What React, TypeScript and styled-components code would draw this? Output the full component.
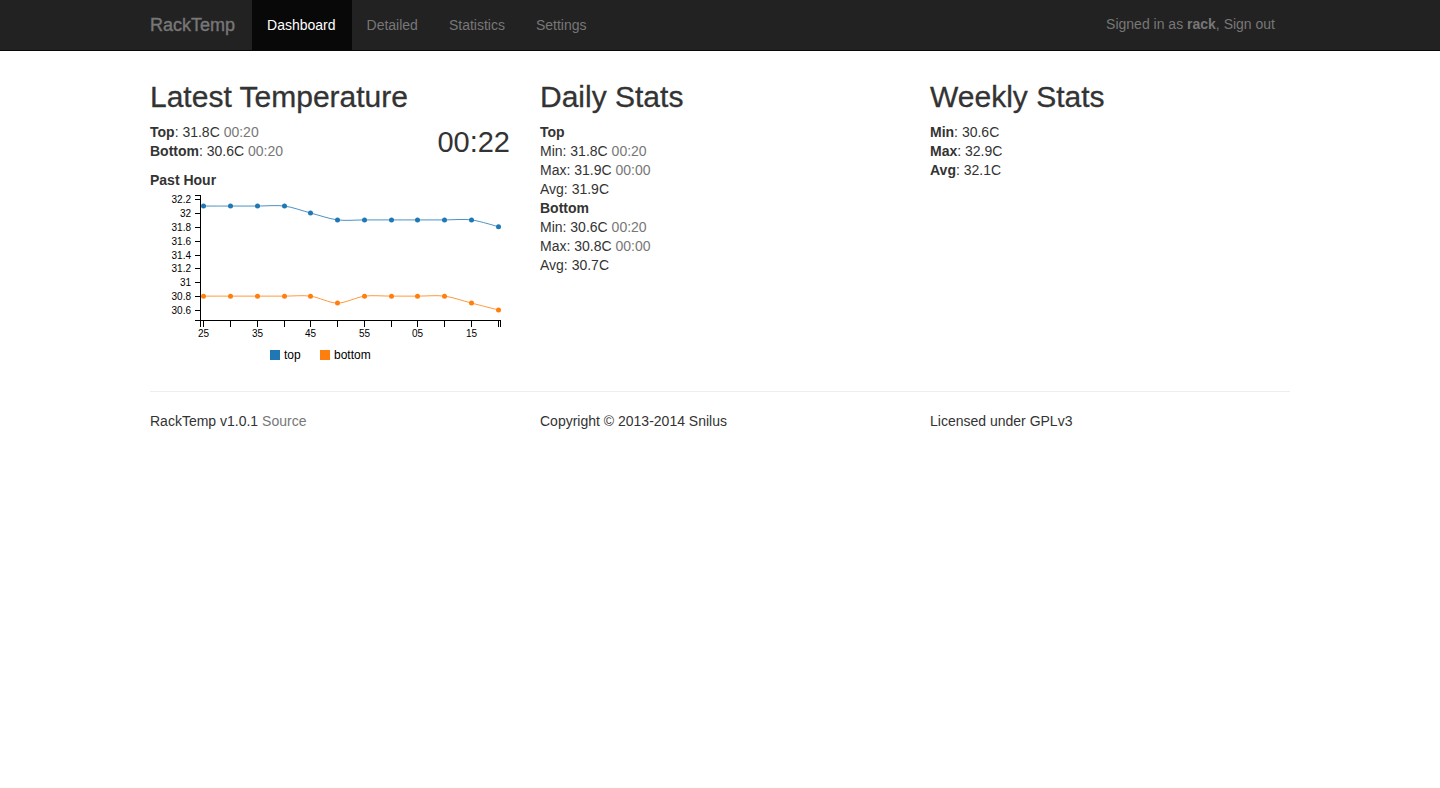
import React from "react";
import styled, { createGlobalStyle } from "styled-components";

const GlobalStyle = createGlobalStyle`
  *, *::before, *::after { box-sizing: border-box; }
  body {
    margin: 0;
    background: #fff;
    color: #333;
    font-family: "Liberation Sans", Arial, sans-serif;
    font-size: 14px;
    line-height: 19px;
  }
`;

const Container = styled.div`
  width: 100%;
  max-width: 1170px;
  margin: 0 auto;
  padding: 0 15px;
`;

const Navbar = styled.header`
  background: #222;
  border-bottom: 1px solid #080808;
`;

const NavInner = styled(Container)`
  display: flex;
  flex-wrap: wrap;
  align-items: flex-start;
  min-height: 50px;
`;

const Brand = styled.a`
  padding-right: 17px;
  color: #777;
  font-size: 18px;
  line-height: 50px;
  text-decoration: none;
  -webkit-text-stroke: 0.4px #777;
`;

const NavList = styled.ul`
  display: flex;
  margin: 0;
  padding: 0;
  list-style: none;
`;

const NavLink = styled.a<{ $active?: boolean }>`
  display: block;
  padding: 0 16px 0 15px;
  line-height: 50px;
  color: ${(p) => (p.$active ? "#fff" : "#777")};
  background: ${(p) => (p.$active ? "#080808" : "transparent")};
  text-decoration: none;
`;

const SignedIn = styled.p`
  margin: 0 15px 0 auto;
  line-height: 48px;
  color: #777;
`;

const MutedLink = styled.a`
  color: #777;
  text-decoration: none;
`;

const Columns = styled.div`
  display: grid;
  grid-template-columns: repeat(auto-fit, minmax(300px, 1fr));
  column-gap: 30px;
`;

const Main = styled.main`
  padding-top: 29px;
`;

const Heading = styled.h2`
  margin: 0 0 10px;
  font-size: 30px;
  font-weight: 400;
  line-height: 33px;
  -webkit-text-stroke: 0.3px #333;
`;

const Readings = styled.div`
  display: flex;
  justify-content: space-between;
  margin-bottom: 10px;
`;

const Clock = styled.time`
  font-size: 29px;
  line-height: 38px;
`;

const Time = styled.time`
  color: #777;
`;

const Chart = styled.svg`
  display: block;
  width: 360px;
  max-width: 100%;
  height: 181px;
  font-size: 10px;
`;

const Footer = styled.footer`
  margin-top: 20px;
  padding-top: 20px;
  border-top: 1px solid #eee;
`;

type Point = [number, number];

const xs = [53, 80, 107, 134, 160, 187, 214, 241, 267, 294, 321, 348].map((x) => x + 0.5);
const xLabels = ["25", "", "35", "", "45", "", "55", "", "05", "", "15", ""];
const yTicks = [32.2, 32, 31.8, 31.6, 31.4, 31.2, 31, 30.8, 30.6];
const yOf = (v: number) => 120 - (v - 30.6) * 69.3;

const series = [
  { name: "top", color: "#1f77b4", legendX: 120, values: [32.1, 32.1, 32.1, 32.1, 32, 31.9, 31.9, 31.9, 31.9, 31.9, 31.9, 31.8] },
  { name: "bottom", color: "#ff7f0e", legendX: 170, values: [30.8, 30.8, 30.8, 30.8, 30.8, 30.7, 30.8, 30.8, 30.8, 30.8, 30.7, 30.6] },
];

function spline(pts: Point[]) {
  const tangent = (i: number): Point => {
    const a = pts[i - 1];
    const b = pts[i + 1];
    return a && b ? [0.15 * (b[0] - a[0]), 0.15 * (b[1] - a[1])] : [0, 0];
  };
  let d = `M${pts[0]}`;
  for (let i = 1; i < pts.length; i++) {
    const t0 = tangent(i - 1);
    const t1 = tangent(i);
    d += `C${pts[i - 1][0] + t0[0]},${pts[i - 1][1] + t0[1]},${pts[i][0] - t1[0]},${pts[i][1] - t1[1]},${pts[i]}`;
  }
  return d;
}

function PastHourChart() {
  return (
    <Chart viewBox="0 0 360 181" role="img" aria-label="Temperature over the past hour">
      <g fill="none" stroke="#000" shapeRendering="crispEdges">
        <path d="M44.5 5.5H50.5V130.5H44.5" />
        <path d="M50.5 136.5V130.5H350.5V136.5" />
        {yTicks.map((v) => {
          const y = Math.round(yOf(v)) + 0.5;
          return <path key={v} d={`M44.5 ${y}H50.5`} />;
        })}
        {xs.map((x) => (
          <path key={x} d={`M${x} 130.5V136.5`} />
        ))}
      </g>
      {yTicks.map((v) => (
        <text key={v} x="41" y={Math.round(yOf(v)) + 4} textAnchor="end">
          {v}
        </text>
      ))}
      {xs.map((x, i) =>
        xLabels[i] ? (
          <text key={x} x={x} y="147" textAnchor="middle">
            {xLabels[i]}
          </text>
        ) : null
      )}
      {series.map((s) => {
        const pts = s.values.map((v, i): Point => [xs[i], yOf(v)]);
        return (
          <g key={s.name} fill={s.color}>
            <path d={spline(pts)} fill="none" stroke={s.color} strokeOpacity="0.8" />
            {pts.map(([x, y]) => (
              <circle key={x} cx={x} cy={y} r="2.5" />
            ))}
            <rect x={s.legendX} y="160" width="10" height="10" />
            <text x={s.legendX + 14} y="169" fill="#000" fontSize="12">
              {s.name}
            </text>
          </g>
        );
      })}
    </Chart>
  );
}

const navItems = ["Dashboard", "Detailed", "Statistics", "Settings"];

export default function App() {
  return (
    <>
      <GlobalStyle />
      <Navbar>
        <NavInner>
          <Brand href="#">RackTemp</Brand>
          <nav>
            <NavList>
              {navItems.map((item, i) => (
                <li key={item}>
                  <NavLink href="#" $active={i === 0}>
                    {item}
                  </NavLink>
                </li>
              ))}
            </NavList>
          </nav>
          <SignedIn>
            Signed in as <b>rack</b>, <MutedLink href="#">Sign out</MutedLink>
          </SignedIn>
        </NavInner>
      </Navbar>
      <Container>
        <Main>
          <Columns>
            <section>
              <Heading>Latest Temperature</Heading>
              <Readings>
                <div>
                  <div><b>Top</b>: 31.8C <Time>00:20</Time></div>
                  <div><b>Bottom</b>: 30.6C <Time>00:20</Time></div>
                </div>
                <Clock>00:22</Clock>
              </Readings>
              <b>Past Hour</b>
              <PastHourChart />
            </section>
            <section>
              <Heading>Daily Stats</Heading>
              <div><b>Top</b></div>
              <div>Min: 31.8C <Time>00:20</Time></div>
              <div>Max: 31.9C <Time>00:00</Time></div>
              <div>Avg: 31.9C</div>
              <div><b>Bottom</b></div>
              <div>Min: 30.6C <Time>00:20</Time></div>
              <div>Max: 30.8C <Time>00:00</Time></div>
              <div>Avg: 30.7C</div>
            </section>
            <section>
              <Heading>Weekly Stats</Heading>
              <div><b>Min</b>: 30.6C</div>
              <div><b>Max</b>: 32.9C</div>
              <div><b>Avg</b>: 32.1C</div>
            </section>
          </Columns>
        </Main>
        <Footer>
          <Columns>
            <div>RackTemp v1.0.1 <MutedLink href="#">Source</MutedLink></div>
            <div>Copyright © 2013-2014 Snilus</div>
            <div>Licensed under GPLv3</div>
          </Columns>
        </Footer>
      </Container>
    </>
  );
}
